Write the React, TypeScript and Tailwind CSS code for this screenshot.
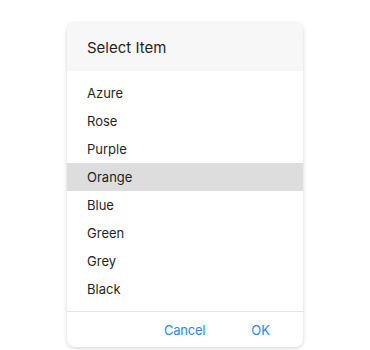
import { useState } from "react";

const items = ["Azure", "Rose", "Purple", "Orange", "Blue", "Green", "Grey", "Black"];

export default function App() {
  const [selected, setSelected] = useState("Orange");

  return (
    <div className="min-h-[350px] bg-white pt-[23px] font-['Inter',sans-serif]">
      <div className="ml-[67px] w-[236px] rounded-lg bg-white shadow-[0_1px_4px_rgba(0,0,0,0.18)] overflow-hidden">
        <div className="h-12 bg-[#f7f7f7] px-5 pt-[2px] flex items-center text-[15px] text-[#1f1f1f]">Select Item</div>
        <div className="py-2">
          {items.map((it) => (
            <div
              key={it}
              onClick={() => setSelected(it)}
              className={`h-7 px-5 pt-[2px] flex items-center text-[13px] text-[#1f1f1f] cursor-pointer ${
                it === selected ? "bg-[#dcdddc]" : ""
              }`}
            >
              {it}
            </div>
          ))}
        </div>
        <div className="h-9 border-t border-[#e3e3e3] pt-[2px] flex items-center justify-end gap-[46px] pr-[33px] text-[13px] text-[#2488f5]">
          <button className="tracking-[-0.2px]">Cancel</button>
          <button>OK</button>
        </div>
      </div>
    </div>
  );
}
